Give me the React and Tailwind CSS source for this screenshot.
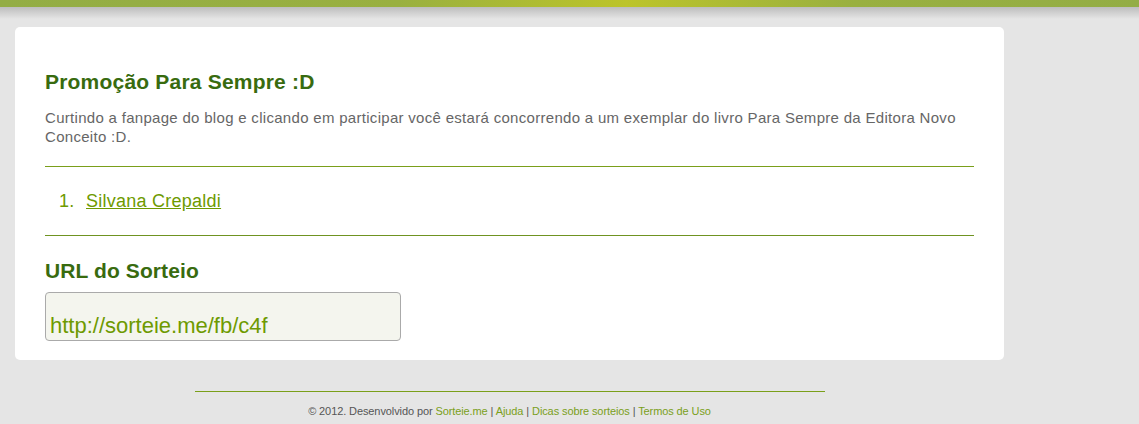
import React from "react";

function TopBar() {
    return (
        <div>
            <div className="h-[7px] bg-[linear-gradient(to_right,#93ad45_0%,#99b040_35%,#bcc42a_55%,#99b040_75%,#93ad45_100%)]" />
            <div className="h-[12px] bg-[linear-gradient(to_bottom,#bdbdbd,#e5e5e5)]" />
        </div>
    );
}

function Footer() {
    return (
        <div className="w-[989px] ml-[15px] flex flex-col items-center">
            <div className="w-[630px] h-px bg-[#7a9f1a]" />
            <p className="mt-[12px] text-[11px] leading-[14px] text-[#555] tracking-[-0.1px]">
                © 2012. Desenvolvido por <a className="text-[#7a9f1a]">Sorteie.me</a> | <a className="text-[#7a9f1a]">Ajuda</a> | <a className="text-[#7a9f1a]">Dicas sobre sorteios</a> | <a className="text-[#7a9f1a]">Termos de Uso</a>
            </p>
        </div>
    );
}

export default function App() {
    return (
        <div className="min-h-[424px] bg-[#e5e5e5] font-['Liberation_Sans',Arial,sans-serif]">
            <TopBar />
            <div className="ml-[15px] mt-[8px] w-[989px] bg-white rounded-[5px] pt-[43px] pb-[19px] px-[30px]">
                <h2 className="text-[21px] leading-[24px] font-bold tracking-[0.2px] text-[#386b0f]">Promoção Para Sempre :D</h2>
                <p className="mt-[14px] text-[15px] leading-[19px] tracking-[0.3px] text-[#666]">
                    Curtindo a fanpage do blog e clicando em participar você estará concorrendo a um exemplar do livro Para Sempre da Editora Novo Conceito :D.
                </p>
                <div className="mt-[20px] h-px bg-[#7a9f1a]" />
                <ol className="mt-[23px] pl-[14px] text-[18px] leading-[22px] tracking-[0.25px] text-[#6e9a00]">
                    <li className="flex">
                        <span className="w-[27px]">1.</span>
                        <a className="underline">Silvana Crepaldi</a>
                    </li>
                </ol>
                <div className="mt-[23px] h-px bg-[#6f9321]" />
                <h2 className="mt-[23px] text-[21px] leading-[24px] font-bold tracking-[0.1px] text-[#386b0f]">URL do Sorteio</h2>
                <div className="mt-[9px] w-[356px] h-[49px] bg-[#f4f5ee] border border-[#aaa] rounded-[4px] flex items-end px-[4px] pb-px">
                    <span className="text-[22px] leading-[26px] text-[#6e9a00]">http://sorteie.me/fb/c4f</span>
                </div>
            </div>
            <div className="mt-[31px]">
                <Footer />
            </div>
        </div>
    );
}
